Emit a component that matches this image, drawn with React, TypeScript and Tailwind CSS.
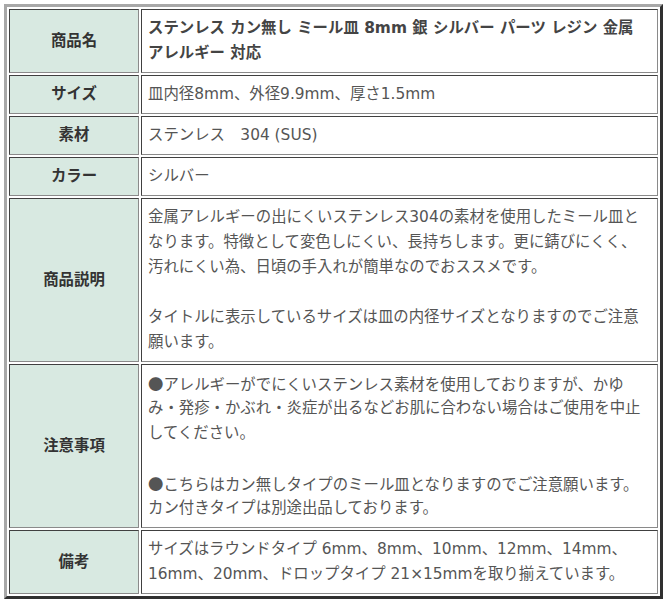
import React from "react";

type Row = { label: string; lines: React.ReactNode[]; bold?: boolean };

const Dot = () => (
  <span style={{ fontFamily: '"Noto Sans CJK JP", sans-serif' }}>●</span>
);

const rows: Row[] = [
  {
    label: "商品名",
    bold: true,
    lines: [
      "ステンレス カン無し ミール皿 8mm 銀 シルバー パーツ レジン 金属",
      "アレルギー 対応",
    ],
  },
  { label: "サイズ", lines: ["皿内径8mm、外径9.9mm、厚さ1.5mm"] },
  { label: "素材", lines: ["ステンレス\u3000304 (SUS)"] },
  { label: "カラー", lines: ["シルバー"] },
  {
    label: "商品説明",
    lines: [
      "金属アレルギーの出にくいステンレス304の素材を使用したミール皿と",
      "なります。特徴として変色しにくい、長持ちします。更に錆びにくく、",
      "汚れにくい為、日頃の手入れが簡単なのでおススメです。",
      "",
      "タイトルに表示しているサイズは皿の内径サイズとなりますのでご注意",
      "願います。",
    ],
  },
  {
    label: "注意事項",
    lines: [
      <>
        <Dot />
        アレルギーがでにくいステンレス素材を使用しておりますが、かゆ
      </>,
      "み・発疹・かぶれ・炎症が出るなどお肌に合わない場合はご使用を中止",
      "してください。",
      "",
      <>
        <Dot />
        こちらはカン無しタイプのミール皿となりますのでご注意願います。
      </>,
      "カン付きタイプは別途出品しております。",
    ],
  },
  {
    label: "備考",
    lines: [
      "サイズはラウンドタイプ 6mm、8mm、10mm、12mm、14mm、",
      "16mm、20mm、ドロップタイプ 21×15mmを取り揃えています。",
    ],
  },
];

export default function App() {
  return (
    <div
      className="bg-white w-[672px] h-[605px] pt-[4px] pl-[4px]"
      style={{ fontFamily: '"DejaVu Sans", "Noto Sans CJK JP", sans-serif' }}
    >
      <table className="w-[659px] border-separate border-spacing-[2px] border-[3px] border-t-[#a8a8a8] border-l-[#a8a8a8] border-b-[#303030] border-r-[#303030] text-[15.4px] leading-[25px]">
        <tbody>
          {rows.map((r) => (
            <tr key={r.label}>
              <td className="w-[130px] bg-[#d8e9e1] text-center align-middle font-bold text-[#333] border border-t-[#404040] border-l-[#404040] border-b-[#8a8a8a] border-r-[#8a8a8a] py-[6px]">
                {r.label}
              </td>
              <td
                className={`px-[6px] py-[6px] border border-t-[#404040] border-l-[#404040] border-b-[#8a8a8a] border-r-[#8a8a8a] whitespace-nowrap ${
                  r.bold ? "font-bold text-[#444]" : "text-[#555]"
                }`}
              >
                {r.lines.map((l, i) => (
                  <div key={i} className="h-[25px]">
                    {l}
                  </div>
                ))}
              </td>
            </tr>
          ))}
        </tbody>
      </table>
    </div>
  );
}
